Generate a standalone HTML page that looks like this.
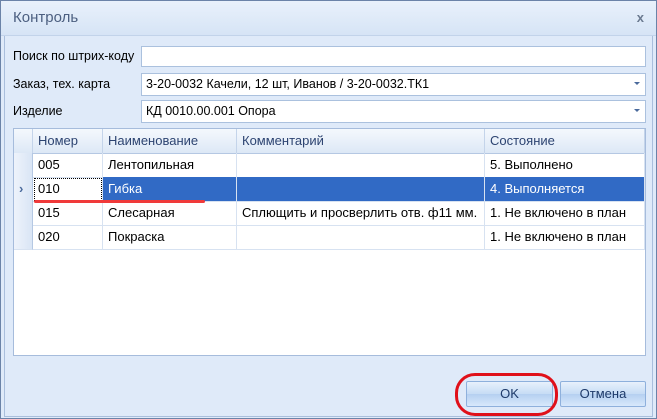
<!DOCTYPE html><html><head><style>
*{margin:0;padding:0;box-sizing:border-box}
body{width:657px;height:419px;overflow:hidden;font-family:"Liberation Sans",sans-serif;font-size:13px;color:#000;background:#fff}
.win{position:absolute;left:0;top:0;width:657px;height:419px;border:1px solid #6b83a8;background:#dfeaf9}
.title{position:absolute;left:0;top:0;width:655px;height:35px;background:linear-gradient(#e9f1fb,#d6e4f6);border-bottom:1px solid #c2d3ea}
.title span{position:absolute;left:12px;top:8px;font-size:15px;color:#4c5f80}
.x{position:absolute;right:12px;top:9px;font-size:13px;font-weight:bold;color:#6b7a90}
.inner{position:absolute;left:3px;top:35px;width:649px;height:381px;border:1px solid #a9bedc;border-top:none}
.lbl{position:absolute;left:12px;font-size:12.5px}
.inp{position:absolute;left:140px;width:505px;background:#fff;border:1px solid #abc1de;padding:3px 4px;font-size:12.5px}
.dd{position:absolute;right:5px;top:8px;width:0;height:0;border-left:3px solid transparent;border-right:3px solid transparent;border-top:3px solid #4a6a9c}
.grid{position:absolute;left:12px;top:127px;width:633px;height:228px;background:#fff;border:1px solid #a6bcdc}
.c{position:absolute;height:25px;line-height:24px;padding-left:5px;border-right:1px solid #d7e2f1;border-bottom:1px solid #d7e2f1;white-space:nowrap}
.h{background:linear-gradient(#f4f8fd,#dde8f6);color:#2d4471;border-right:1px solid #c4d4ea;border-bottom:1px solid #b5c8e3}
.ind{background:linear-gradient(90deg,#eef3fb,#d9e5f5);border-right:1px solid #b5c8e3}
.sel{background:#316ac5;color:#fff}
.btn{position:absolute;top:380px;height:26px;border:1px solid #8eb0dc;border-radius:2px;background:linear-gradient(#e8f1fc,#c6dcf5 50%,#b5d0f1 51%,#d8e8fb);text-align:center;line-height:24px;color:#1e3a6a}
</style></head><body>
<div class="win">
<div class="title"><span>Контроль</span><div class="x">x</div></div>
<div class="inner"></div>
<div class="lbl" style="top:48px">Поиск по штрих-коду</div>
<div class="inp" style="top:45px;height:21px"></div>
<div class="lbl" style="top:76px">Заказ, тех. карта</div>
<div class="inp" style="top:72px;height:23px">3-20-0032 Качели, 12 шт, Иванов / 3-20-0032.ТК1<div class="dd"></div></div>
<div class="lbl" style="top:103px">Изделие</div>
<div class="inp" style="top:99px;height:23px">КД 0010.00.001 Опора<div class="dd"></div></div>
<div class="grid">
<div class="c h" style="left:0;top:0;width:19px"></div>
<div class="c h" style="left:19px;top:0;width:70px">Номер</div>
<div class="c h" style="left:89px;top:0;width:134px">Наименование</div>
<div class="c h" style="left:223px;top:0;width:248px">Комментарий</div>
<div class="c h" style="left:471px;top:0;width:160px">Состояние</div>

<div class="c ind" style="left:0;top:24px;width:19px"></div>
<div class="c" style="left:19px;top:24px;width:70px">005</div>
<div class="c" style="left:89px;top:24px;width:134px">Лентопильная</div>
<div class="c" style="left:223px;top:24px;width:248px"></div>
<div class="c" style="left:471px;top:24px;width:160px">5. Выполнено</div>

<div class="c ind" style="left:0;top:48px;width:19px;color:#4a6a9c;font-weight:bold">›</div>
<div class="c" style="left:19px;top:48px;width:70px;outline:1px dotted #000;outline-offset:-2px">010</div>
<div class="c sel" style="left:89px;top:48px;width:134px">Гибка</div>
<div class="c sel" style="left:223px;top:48px;width:248px"></div>
<div class="c sel" style="left:471px;top:48px;width:160px">4. Выполняется</div>

<div class="c ind" style="left:0;top:72px;width:19px"></div>
<div class="c" style="left:19px;top:72px;width:70px">015</div>
<div class="c" style="left:89px;top:72px;width:134px">Слесарная</div>
<div class="c" style="left:223px;top:72px;width:248px">Сплющить и просверлить отв. ф11 мм.</div>
<div class="c" style="left:471px;top:72px;width:160px">1. Не включено в план</div>

<div class="c ind" style="left:0;top:96px;width:19px"></div>
<div class="c" style="left:19px;top:96px;width:70px">020</div>
<div class="c" style="left:89px;top:96px;width:134px">Покраска</div>
<div class="c" style="left:223px;top:96px;width:248px"></div>
<div class="c" style="left:471px;top:96px;width:160px">1. Не включено в план</div>
</div>
<div style="position:absolute;left:33px;top:199px;width:171px;height:3px;background:#f03a3a;border-radius:2px"></div>
<div class="btn" style="left:465px;width:87px">OK</div>
<div class="btn" style="left:559px;width:86px">Отмена</div>
<div style="position:absolute;left:454px;top:372px;width:103px;height:43px;border:3px solid #e0101a;border-radius:20px"></div>
</div>
</body></html>
